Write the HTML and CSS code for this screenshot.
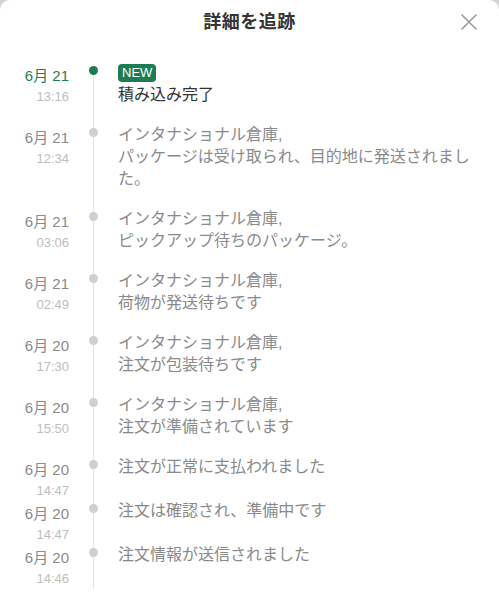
FILE: index.html
```html
<!DOCTYPE html>
<html lang="ja">
<head>
  <meta charset="UTF-8">
  <meta name="viewport" content="width=device-width, initial-scale=1.0">
  <title>詳細を追跡</title>
  <link rel="stylesheet" href="styles.css">
</head>
<body>
  <div class="sheet">
    <div class="header">
      <span></span>
      <h1 class="title">詳細を追跡</h1>
      <button type="button" class="close" aria-label="閉じる">
        <svg width="16" height="16" viewBox="0 0 16 16">
          <path d="M1 1L15 15M15 1L1 15" stroke="#9a9a9a" stroke-width="1.6" fill="none" stroke-linecap="round"/>
        </svg>
      </button>
    </div>

    <ul class="track">
      <li class="step current">
        <div class="when">
          <div class="date">6月 21</div>
          <div class="time">13:16</div>
        </div>
        <div class="mark"><span class="dot"></span></div>
        <div class="what">
          <span class="badge">NEW</span>
          <p>積み込み完了</p>
        </div>
      </li>
      <li class="step">
        <div class="when">
          <div class="date">6月 21</div>
          <div class="time">12:34</div>
        </div>
        <div class="mark"><span class="dot"></span></div>
        <div class="what">
          <p>インタナショナル倉庫,</p>
          <p>パッケージは受け取られ、目的地に発送されました。</p>
        </div>
      </li>
      <li class="step">
        <div class="when">
          <div class="date">6月 21</div>
          <div class="time">03:06</div>
        </div>
        <div class="mark"><span class="dot"></span></div>
        <div class="what">
          <p>インタナショナル倉庫,</p>
          <p>ピックアップ待ちのパッケージ。</p>
        </div>
      </li>
      <li class="step">
        <div class="when">
          <div class="date">6月 21</div>
          <div class="time">02:49</div>
        </div>
        <div class="mark"><span class="dot"></span></div>
        <div class="what">
          <p>インタナショナル倉庫,</p>
          <p>荷物が発送待ちです</p>
        </div>
      </li>
      <li class="step">
        <div class="when">
          <div class="date">6月 20</div>
          <div class="time">17:30</div>
        </div>
        <div class="mark"><span class="dot"></span></div>
        <div class="what">
          <p>インタナショナル倉庫,</p>
          <p>注文が包装待ちです</p>
        </div>
      </li>
      <li class="step">
        <div class="when">
          <div class="date">6月 20</div>
          <div class="time">15:50</div>
        </div>
        <div class="mark"><span class="dot"></span></div>
        <div class="what">
          <p>インタナショナル倉庫,</p>
          <p>注文が準備されています</p>
        </div>
      </li>
      <li class="step">
        <div class="when">
          <div class="date">6月 20</div>
          <div class="time">14:47</div>
        </div>
        <div class="mark"><span class="dot"></span></div>
        <div class="what">
          <p>注文が正常に支払われました</p>
        </div>
      </li>
      <li class="step">
        <div class="when">
          <div class="date">6月 20</div>
          <div class="time">14:47</div>
        </div>
        <div class="mark"><span class="dot"></span></div>
        <div class="what">
          <p>注文は確認され、準備中です</p>
        </div>
      </li>
      <li class="step">
        <div class="when">
          <div class="date">6月 20</div>
          <div class="time">14:46</div>
        </div>
        <div class="mark"><span class="dot"></span></div>
        <div class="what">
          <p>注文情報が送信されました</p>
        </div>
      </li>
    </ul>
  </div>
</body>
</html>
```

FILE: styles.css
```css
body {
  margin: 0;
  background-color: #d4d4d4;
  font-family: "Liberation Sans", "Noto Sans CJK JP", sans-serif;
}
.sheet {
  width: 499px;
  height: 600px;
  background: #fff;
  border-radius: 10px 10px 0 0;
  overflow: hidden;
}
.header {
  display: grid;
  grid-template-columns: 1fr auto 1fr;
  align-items: center;
  height: 44px;
}
.title {
  margin: 0;
  font-size: 18px;
  font-weight: bold;
  line-height: 44px;
  color: #333;
  letter-spacing: 0.5px;
}
.close {
  justify-self: end;
  margin-right: 22px;
  padding: 0;
  width: 16px;
  height: 16px;
  border: none;
  background: none;
  display: flex;
}
.track {
  list-style: none;
  margin: 0;
  padding: 18px 0 0 0;
}
.step {
  display: flex;
}
.when {
  width: 69px;
  flex-shrink: 0;
  padding-top: 3px;
  text-align: right;
}
.date {
  font-size: 15px;
  line-height: 22px;
  color: #8a8a8a;
}
.time {
  font-size: 13px;
  line-height: 19px;
  color: #bdbdbd;
}
.current .date {
  color: #1d7d52;
}
.mark {
  width: 49px;
  flex-shrink: 0;
  position: relative;
}
.mark::before {
  content: "";
  position: absolute;
  left: 24px;
  top: 0;
  bottom: 0;
  width: 1px;
  background: #e2e2e2;
}
.current .mark::before {
  top: 8px;
}
.dot {
  position: absolute;
  left: 20px;
  top: 4px;
  width: 9px;
  height: 9px;
  border-radius: 50%;
  background: #cfcfcf;
}
.current .dot {
  background: #1d7d52;
}
.what {
  width: 362px;
  padding-bottom: 18px;
  font-size: 16px;
  line-height: 22px;
  color: #8a8a8a;
}
.what p {
  margin: 0;
}
.current .what {
  color: #333;
}
.badge {
  display: inline-block;
  margin-top: 2px;
  margin-bottom: 2px;
  padding: 0 4px;
  height: 18px;
  line-height: 18px;
  font-size: 13px;
  color: #fff;
  background: #1d7d52;
  border-radius: 4px;
  vertical-align: top;
}
```
